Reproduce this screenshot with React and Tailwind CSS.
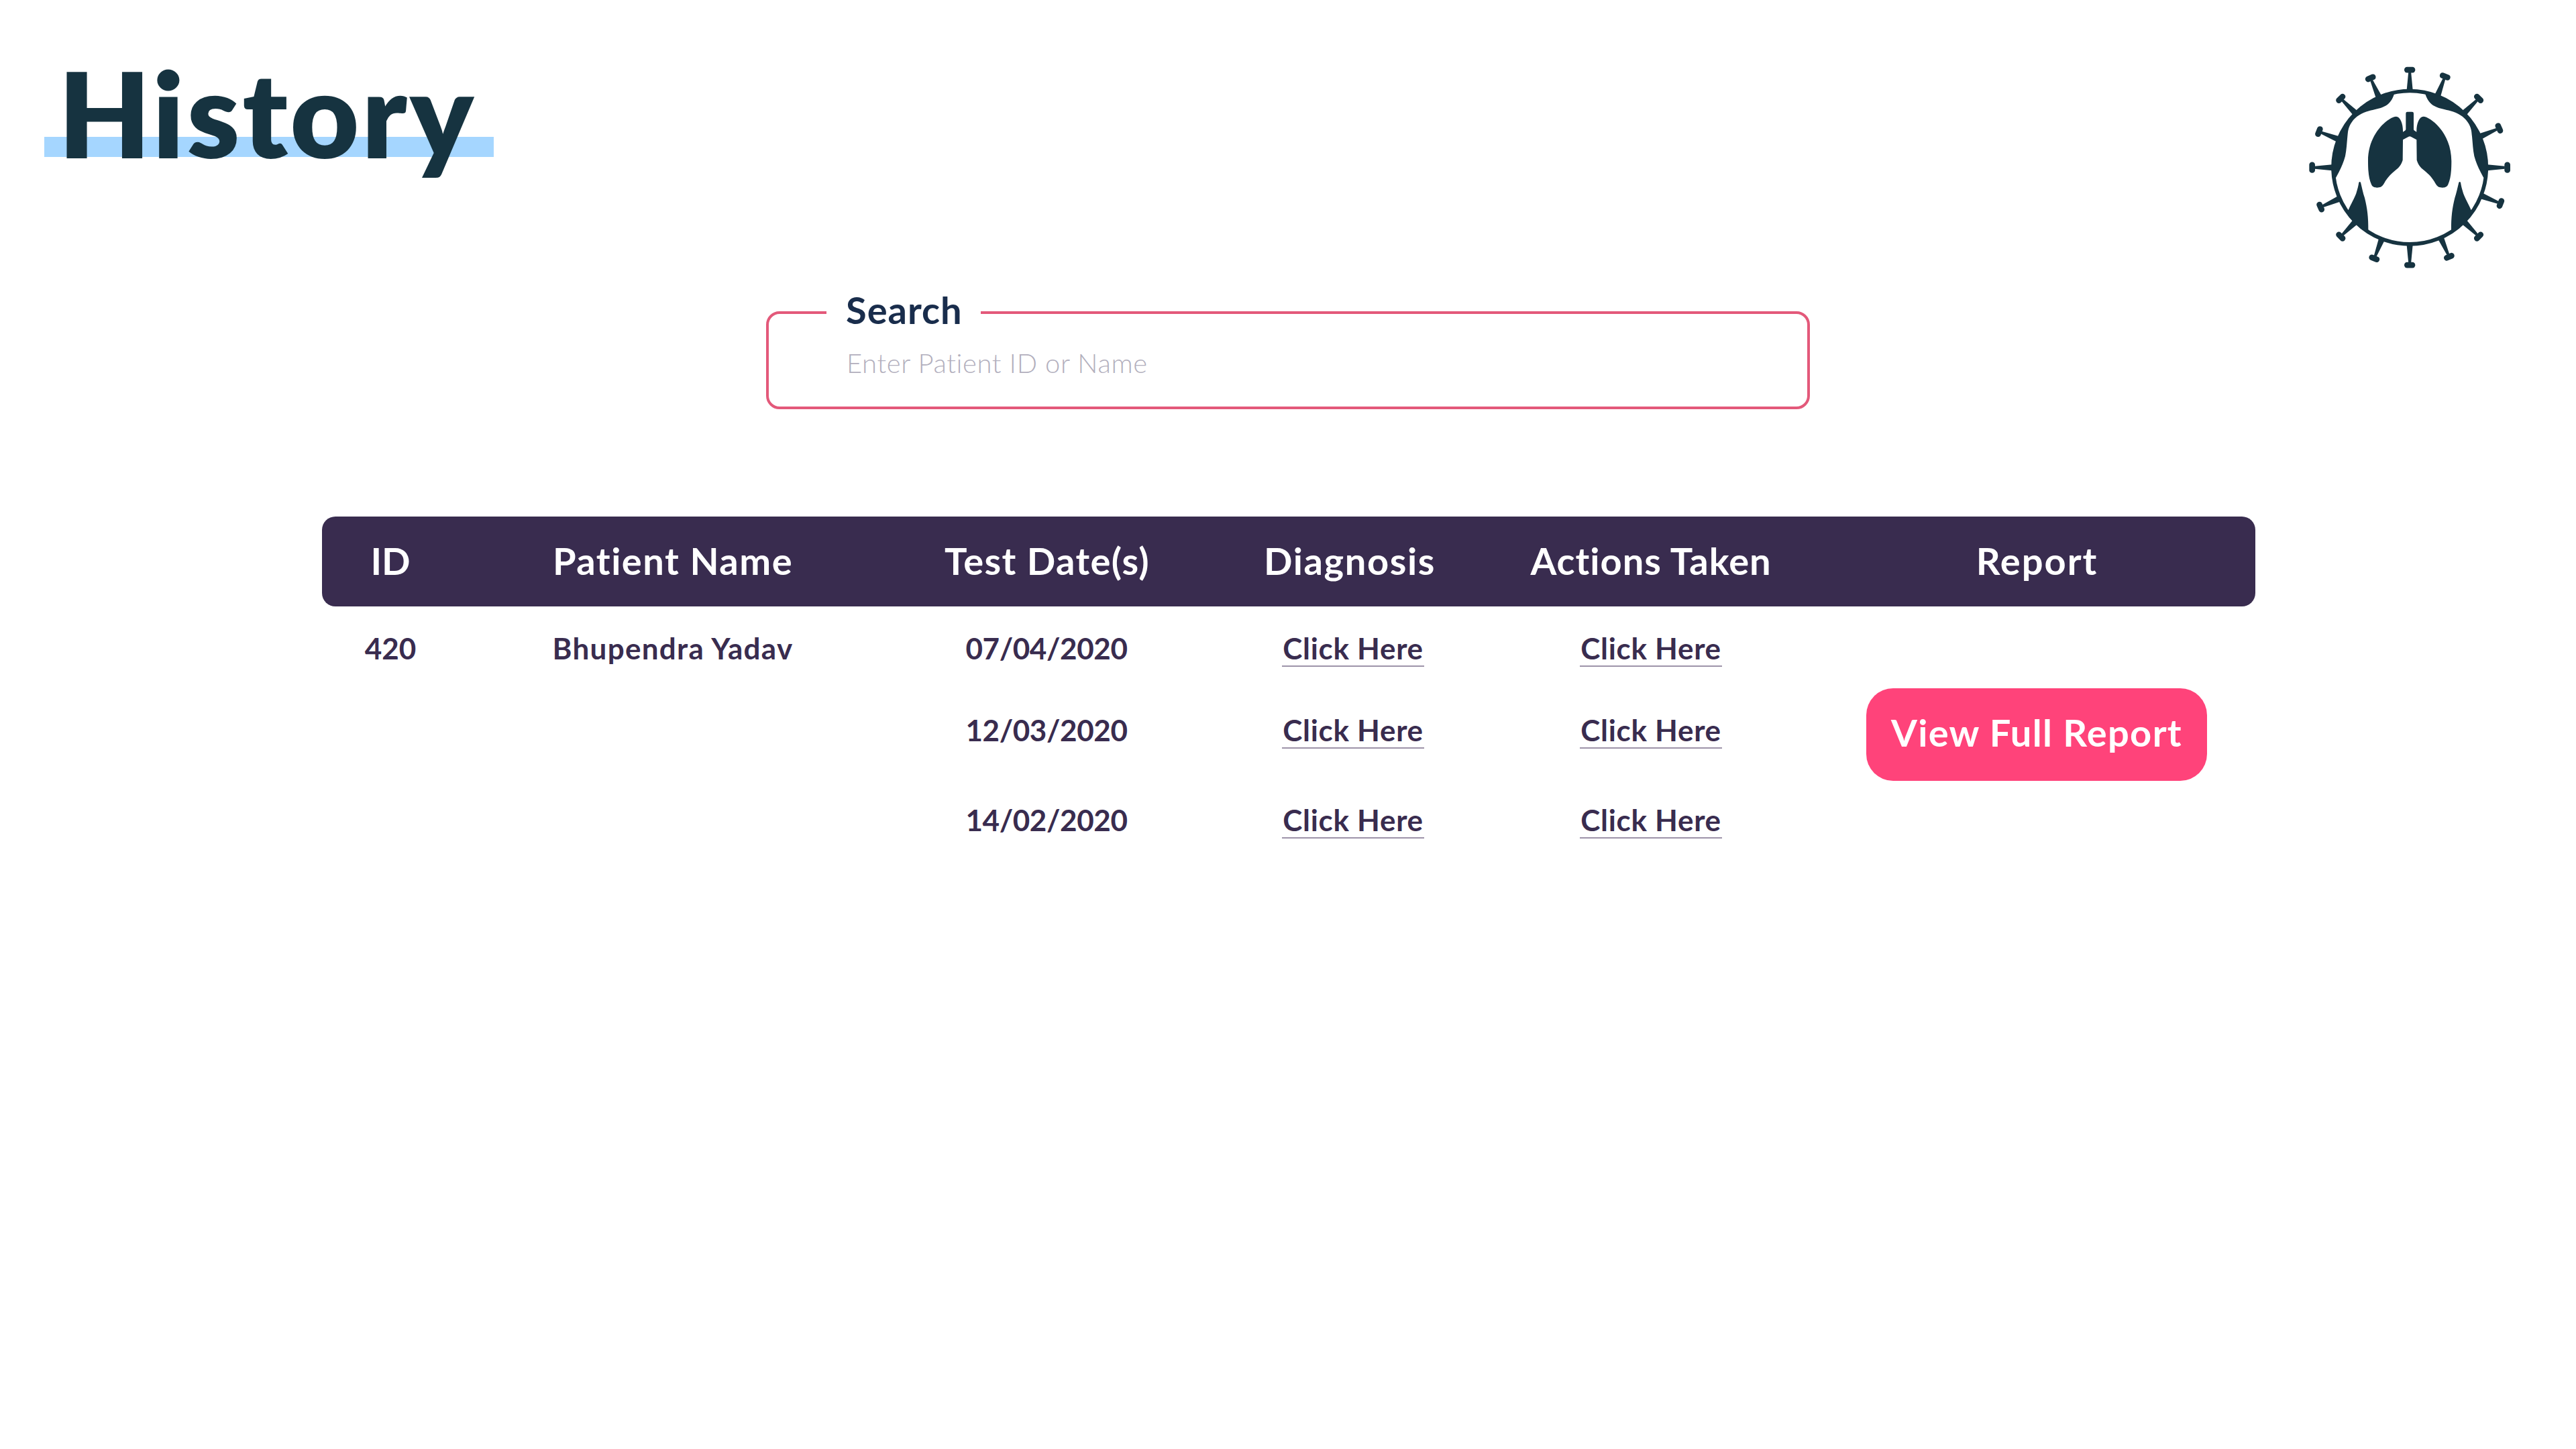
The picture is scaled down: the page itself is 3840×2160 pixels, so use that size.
import React from "react";

const SPIKES = [0, 21.2, 45, 66.3, 90, 111.6, 135, 156.2, 180, 201.3, 225, 246.1, 270, 291.6, 315, 336.3];

function HalfBody() {
  return (
    <>
      <path d="M447 179C440 205 425 225 405 235C380 248 355 250 335 256C300 265 275 282 258 305C240 330 240 350 238 370C235 400 234 430 228 458C218 495 200 530 186 555L174 545A343 343 0 0 1 447 173Z" />
      <path d="M289 576Q293 570 297 576C303 600 308 625 315 645C326 690 332 730 331 790L322 795A345 345 0 0 1 232 705L242 700C255 670 270 645 277 625C283 605 287 590 289 576Z" />
      <path d="M517 260H506Q499 260 499 267V338Q499 342 494 345L486 350C487 315 475 281 455 281C428 281 330 350 330 480C330 530 334 560 345 585C350 595 357 599 370 599C385 599 393 596 402 580C415 555 430 540 452 522C470 508 478 497 485 476L486 385L510 372Q513 370 517 370Z" />
    </>
  );
}

function Logo() {
  return (
    <svg className="h-[340px] w-[340px]" viewBox="0 0 1020 1020" fill="#163340">
      <circle cx="516.5" cy="509" r="342.5" fill="none" stroke="#163340" strokeWidth="17" />
      {SPIKES.map((a) => (
        <g key={a} transform={`rotate(${a} 516.5 509)`}>
          <rect x="492" y="59.500" width="49" height="26" rx="12.500" />
          <path d="M510.500 84H522.500L530 162H503Z" />
        </g>
      ))}
      <HalfBody />
      <g transform="translate(1033 0) scale(-1 1)">
        <HalfBody />
      </g>
    </svg>
  );
}

const GRID = "grid grid-cols-[204px_641px_470px_440px_452px_675px]";

const VISITS = [
  { date: "07/04/2020", height: "h-[122px]" },
  { date: "12/03/2020", height: "h-[134px]" },
  { date: "14/02/2020", height: "h-[57px]" },
];

function LinkColumn({ className = "" }) {
  return (
    <div className={`flex flex-col items-center ${className}`}>
      {VISITS.map((v) => (
        <div key={v.date} className={v.height}>
          <a
            href="#"
            className="block h-[57px] w-[212px] whitespace-nowrap border-b-2 border-[#9d93a9] text-center leading-[58px] tracking-[0.7px]"
          >
            Click Here
          </a>
        </div>
      ))}
    </div>
  );
}

export default function App() {
  return (
    <div className="flex h-[2160px] w-[3840px] flex-col bg-white font-['Lato',sans-serif] text-[#392c4f]">
      <header className="flex h-[384px] items-start justify-between pl-[66px] pr-[80px] pt-[80px]">
        <h1 className="mt-[-19px] h-[214px] w-[670px] bg-[linear-gradient(#a5d6ff,#a5d6ff)] bg-[length:100%_30px] bg-[position:0_143px] bg-no-repeat pl-[21px] text-[177px] font-extrabold leading-[214px] tracking-[4px] text-[#163340]">
          History
        </h1>
        <Logo />
      </header>

      <fieldset className="ml-[1142px] mt-[48px] h-[178px] w-[1556px] rounded-[20px] border-4 border-[#e3597a] px-[86px]">
        <legend className="h-[68px] w-[230px] pl-[29px] text-[56px] font-bold leading-[60px] tracking-[1px] text-[#192d4c]">
          Search
        </legend>
        <input
          type="text"
          placeholder="Enter Patient ID or Name"
          className="ml-[30px] mt-[17px] block h-[48px] w-[1200px] bg-transparent text-[40px] font-light leading-[48px] tracking-[0.6px] outline-none placeholder:text-[#b2afbd]"
        />
      </fieldset>

      <section className="ml-[480px] mt-[160px] w-[2882px]">
        <div
          className={`${GRID} h-[134px] rounded-[20px] bg-[#392c4f] text-center text-[56px] font-bold leading-[132px] text-white`}
        >
          <span>ID</span>
          <span className="pr-[3px] tracking-[1.5px]">Patient Name</span>
          <span className="pl-[2px] tracking-[1.4px]">Test Date(s)</span>
          <span className="pr-[6px] tracking-[1.6px]">Diagnosis</span>
          <span className="tracking-[1px]">Actions Taken</span>
          <span className="pl-[24px] tracking-[2px]">Report</span>
        </div>

        <div className={`${GRID} pt-[33px] text-[44px] font-bold`}>
          <div className="text-center leading-[58px]">420</div>
          <div className="pr-[3px] text-center leading-[58px] tracking-[1.27px]">Bhupendra Yadav</div>
          <div className="flex flex-col items-center leading-[58px] tracking-[-0.4px]">
            {VISITS.map((v) => (
              <div key={v.date} className={v.height}>
                {v.date}
              </div>
            ))}
          </div>
          <LinkColumn className="pl-[4px]" />
          <LinkColumn />
          <div className="flex justify-center pl-[23px] pt-[89px]">
            <button className="h-[138px] w-[508px] rounded-[40px] bg-[#ff437a] pb-[6px] text-[56px] font-bold tracking-[1.35px] text-white">
              View Full Report
            </button>
          </div>
        </div>
      </section>
    </div>
  );
}
